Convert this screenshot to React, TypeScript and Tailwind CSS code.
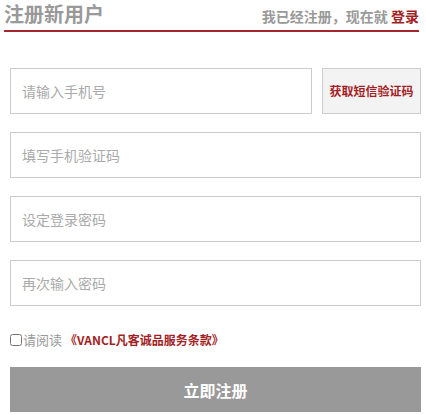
import React from 'react';

const font = { fontFamily: '"Microsoft YaHei", "Noto Sans CJK SC", sans-serif' };

function Field({ placeholder }: { placeholder: string }) {
  return (
    <input
      type="text"
      placeholder={placeholder}
      className="h-[46px] w-full border border-[#cccccc] bg-white pl-[11px] text-[14px] text-[#333] outline-none placeholder:text-[#aaaaaa]" />);
}

export default function App() {
  return (
    <div className="w-[426px] h-[415px] bg-white" style={font}>
      <div className="ml-[4px] w-[415px] h-[32px] flex items-end justify-between border-b-2 border-[#a6262b] pb-[2px]">
        <h1 className="text-[20px] leading-[28px] font-bold text-[#999999]">注册新用户</h1>
        <div className="text-[14px] leading-[22px] font-bold text-[#999999] mb-[1px]">
          我已经注册，现在就 <a href="#" className="text-[#a31f26]">登录</a>
        </div>
      </div>

      <div className="ml-[10px] w-[411px] mt-[36px] flex flex-col gap-[18px]">
        <div className="flex gap-[10px]">
          <div className="w-[302px]">
            <Field placeholder="请输入手机号" />
          </div>
          <button className="h-[46px] flex-1 border border-[#cccccc] bg-[#f3f3f3] text-[12px] font-bold text-[#a31f26]">
            获取短信验证码
          </button>
        </div>
        <Field placeholder="填写手机验证码" />
        <Field placeholder="设定登录密码" />
        <Field placeholder="再次输入密码" />
      </div>

      <label className="ml-[10px] mt-[26px] h-[16px] flex items-center text-[13px] text-[#999999]">
        <input type="checkbox" className="m-0 mr-[1px] h-[12px] w-[12px]" />
        <span>请阅读</span>
        <a href="#" className="ml-[3px] text-[12px] font-bold text-[#a31f26]">《VANCL凡客诚品服务条款》</a>
      </label>

      <button className="ml-[10px] mt-[19px] w-[411px] h-[45px] bg-[#999999] text-white text-[16px] font-bold">
        立即注册
      </button>
    </div>);
}
